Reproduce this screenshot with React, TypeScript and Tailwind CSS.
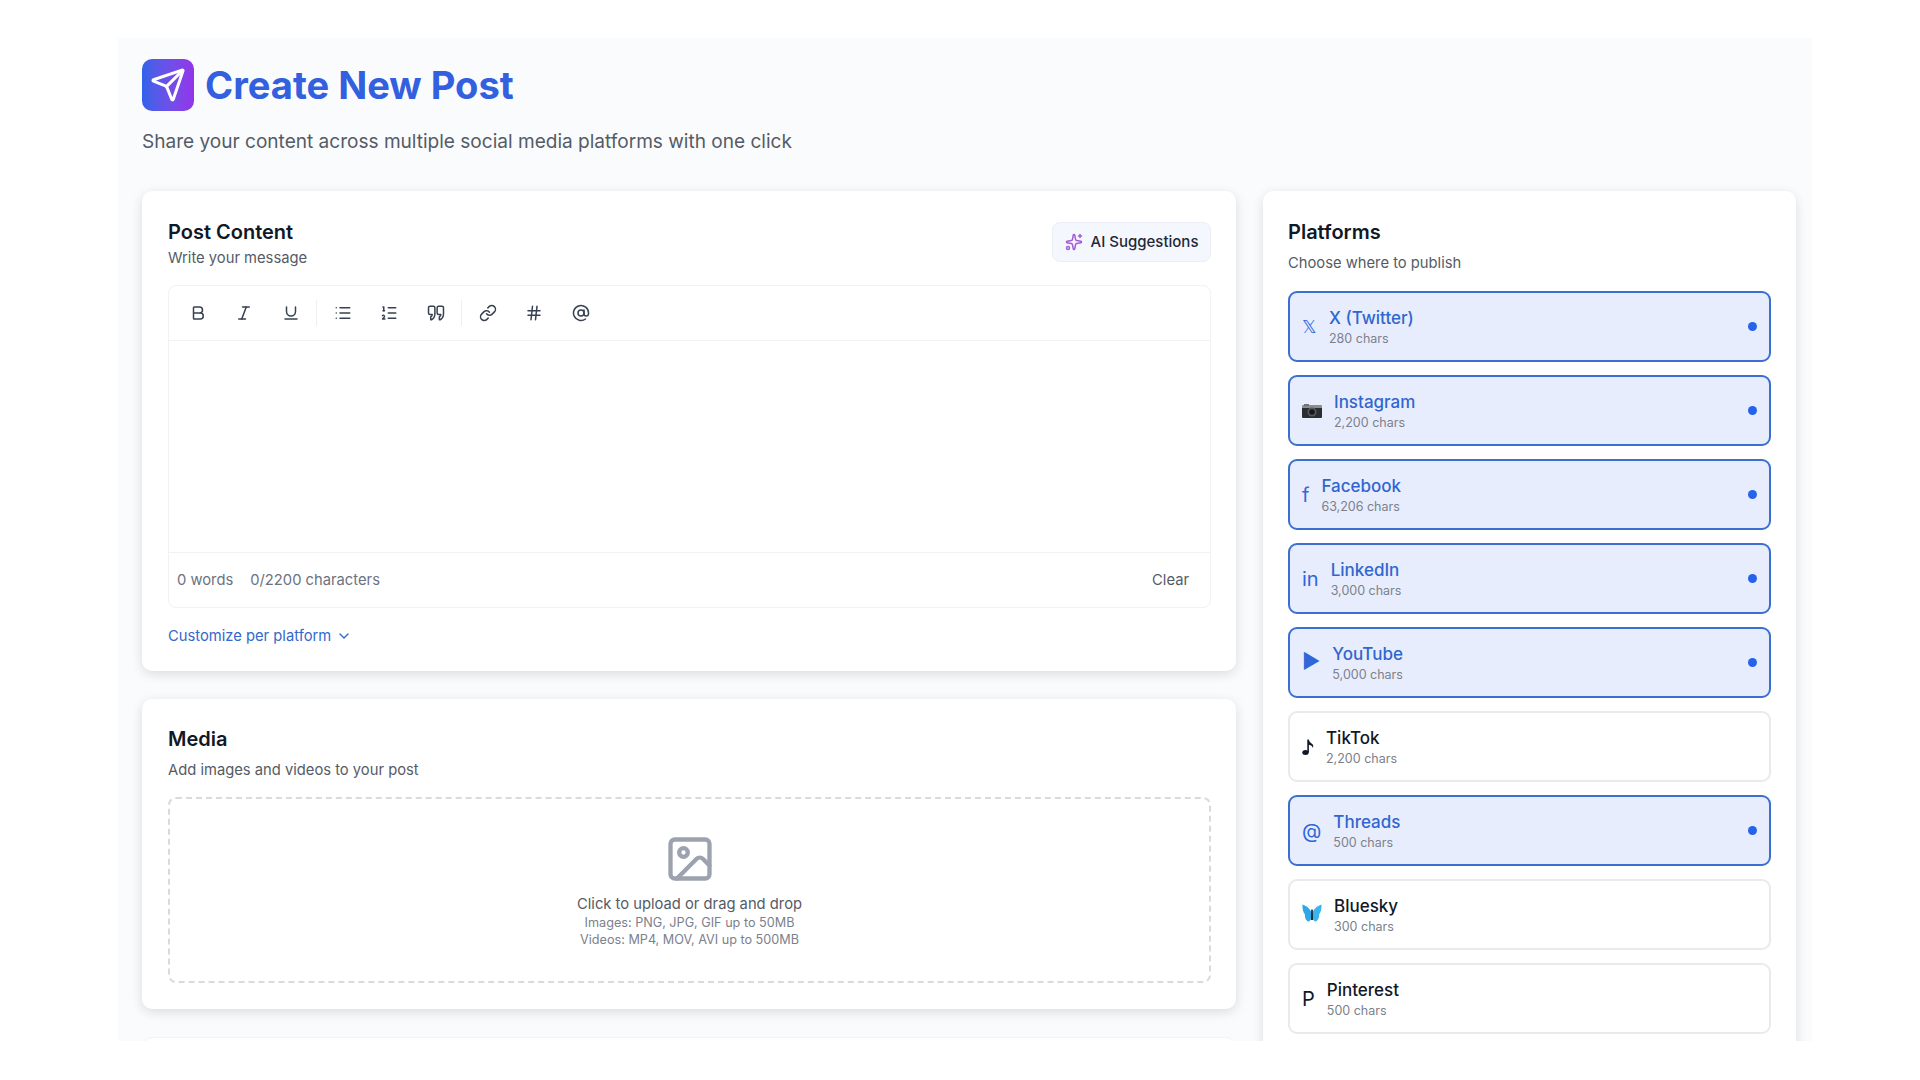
import React from "react";
import {
  AtSign,
  Bold,
  ChevronDown,
  Hash,
  Image,
  Italic,
  Link,
  List,
  ListOrdered,
  Send,
  Sparkles,
  Underline,
} from "lucide-react";

const CameraIcon = () => (
  <svg width="20" height="16" viewBox="0 0 20 16" className="block">
    <rect x="2" y="1" width="5" height="2" fill="#777" />
    <rect x="0" y="2.5" width="20" height="12.5" rx="1" fill="#2b2d30" />
    <rect x="0" y="2.5" width="20" height="2.5" fill="#8b8d90" />
    <circle cx="10" cy="9" r="4.6" fill="#55585c" />
    <circle cx="10" cy="9" r="2.8" fill="#16181a" />
  </svg>
);

const ButterflyIcon = () => (
  <svg width="20" height="20" viewBox="0 0 20 20" className="-mt-[3px] block">
    <path d="M9.500 9.500C8.500 6 4 2.500.5 1.500c-.3 4 .6 8 2.500 10-.3 3 1 6.500 3.500 7 2 .3 3-4 3-9z" fill="#2ea8e6" />
    <path d="M10.500 9.500C11.500 6 16 2.500 19.500 1.500c.3 4-.6 8-2.500 10 .3 3-1 6.500-3.500 7-2 .3-3-4-3-9z" fill="#3ab6ef" />
    <path d="M9.200 6.500h1.600l.4 10.500H8.800z" fill="#14313f" />
  </svg>
);

const NoteIcon = () => (
  <svg width="12" height="18" viewBox="0 0 12 18" className="block">
    <ellipse cx="3.500" cy="14.500" rx="3.200" ry="2.500" fill="#111827" />
    <path d="M5.300 14.500V1.500h1.500c.3 2.500 2.200 3.300 3.500 4.500 1 1 1.200 2.500.6 4-.4-1.800-2-3-4-3.300v7.800z" fill="#111827" />
  </svg>
);

const platforms = [
  { name: "X (Twitter)", chars: "280 chars", icon: <span className="block text-[18px]">𝕏</span>, on: true },
  { name: "Instagram", chars: "2,200 chars", icon: <CameraIcon />, on: true },
  { name: "Facebook", chars: "63,206 chars", icon: "f", on: true },
  { name: "LinkedIn", chars: "3,000 chars", icon: "in", on: true },
  { name: "YouTube", chars: "5,000 chars", icon: <span className="-mt-[4px] block">▶</span>, on: true },
  { name: "TikTok", chars: "2,200 chars", icon: <NoteIcon />, on: false },
  { name: "Threads", chars: "500 chars", icon: "@", on: true },
  { name: "Bluesky", chars: "300 chars", icon: <ButterflyIcon />, on: false },
  { name: "Pinterest", chars: "500 chars", icon: "P", on: false },
];

const toolGroups = [
  [Bold, Italic, Underline],
  [List, ListOrdered, QuoteIcon],
  [Link, Hash, AtSign],
];

function QuoteIcon(props: any) {
  return (
    <svg viewBox="0 0 24 24" fill="none" stroke="currentColor" strokeWidth="2" strokeLinecap="round" strokeLinejoin="round" {...props}>
      <path d="M4 3h4.500a2 2 0 0 1 2 2v8c0 3.500-1.800 6.500-4.500 8H5v-4c1.200-.5 2-1.500 2-3H4a2 2 0 0 1-2-2V5a2 2 0 0 1 2-2z" />
      <path d="M15.500 3H20a2 2 0 0 1 2 2v8c0 3.500-1.800 6.500-4.500 8h-1v-4c1.200-.5 2-1.500 2-3h-3a2 2 0 0 1-2-2V5a2 2 0 0 1 2-2z" />
    </svg>
  );
}

export default function App() {
  return (
    <div className="h-screen overflow-hidden bg-white pt-[38px] pl-[118px] font-['Inter',sans-serif]">
      <div className="h-[1003px] w-[1694px] overflow-hidden bg-[#fafbfd] pt-[21px] pr-4 pl-6">
        <header>
          <div className="flex items-center gap-[11px]">
            <div className="flex h-[52px] w-[52px] items-center justify-center rounded-[10px] bg-gradient-to-r from-[#2f62e8] to-[#9333ea] text-white">
              <Send size={36} strokeWidth={2} />
            </div>
            <h1 className="text-[38.1px] leading-[52px] font-bold text-[#3260de]">Create New Post</h1>
          </div>
          <p className="mt-[17px] text-[19.06px] leading-[28px] text-[#555b66]">
            Share your content across multiple social media platforms with one click
          </p>
        </header>

        <div className="mt-[35px] grid grid-cols-[1094px_533px] gap-[27px]">
          <div className="flex flex-col gap-[28px]">
            <section className="h-[480px] rounded-[10px] bg-white pt-[28px] pr-[25px] pl-[26px] shadow-[0_3px_12px_rgba(0,0,0,0.13)]">
              <div className="flex items-start justify-between">
                <div>
                  <h2 className="text-[20px] leading-[26px] font-semibold text-[#111827]">Post Content</h2>
                  <p className="mt-[2px] text-[14.75px] leading-[22px] text-[#555b66]">Write your message</p>
                </div>
                <button className="mt-[3px] flex h-[40px] w-[159px] items-center justify-center gap-[8px] rounded-[8px] border border-[#eceef5] bg-[#f5f7fe] text-[15px] font-medium text-[#1f2937]">
                  <Sparkles size={18} className="text-[#a45bd8]" />
                  AI Suggestions
                </button>
              </div>

              <div className="mt-[16px] h-[323px] rounded-[8px] border border-[#f1f2f4]">
                <div className="flex h-[55px] items-center gap-[7px] border-b border-[#f1f2f4] px-[9px]">
                  {toolGroups.map((group, i) => (
                    <React.Fragment key={i}>
                      {i > 0 && <div className="-mx-[1.25px] h-[26px] w-px bg-[#eeeff1]" />}
                      {group.map((Icon, j) => (
                        <button key={j} className="flex h-[39px] w-[39.5px] items-center justify-center text-[#374151]">
                          <Icon width={18} height={18} />
                        </button>
                      ))}
                    </React.Fragment>
                  ))}
                </div>
                <div className="h-[211px]" />
                <div className="flex h-[55px] items-center justify-between border-t border-[#f1f2f4] pr-[21px] pl-[8px] text-[14.75px] text-[#6b7280]">
                  <div className="flex gap-[17px]">
                    <span>0 words</span>
                    <span>0/2200 characters</span>
                  </div>
                  <span className="text-[#555b66]">Clear</span>
                </div>
              </div>

              <button className="mt-[18px] flex items-center gap-[5px] text-[14.75px] leading-[20px] text-[#3468cc]">
                Customize per platform
                <ChevronDown size={16} />
              </button>
            </section>

            <section className="h-[310px] rounded-[10px] bg-white pt-[27px] pr-[25px] pl-[26px] shadow-[0_3px_12px_rgba(0,0,0,0.13)]">
              <h2 className="text-[20px] leading-[26px] font-semibold text-[#111827]">Media</h2>
              <p className="mt-[7px] text-[14.75px] leading-[22px] text-[#555b66]">Add images and videos to your post</p>
              <div className="mt-[16px] flex h-[186px] flex-col items-center rounded-[8px] border-2 border-dashed border-[#d8dadf] pt-[34px]">
                <Image size={52} strokeWidth={2} className="text-[#9ca3af]" />
                <p className="mt-[9px] text-[14.75px] leading-[20px] text-[#555b66]">Click to upload or drag and drop</p>
                <p className="text-[12.65px] leading-[17px] text-[#7b818c]">Images: PNG, JPG, GIF up to 50MB</p>
                <p className="text-[12.65px] leading-[17px] text-[#7b818c]">Videos: MP4, MOV, AVI up to 500MB</p>
              </div>
            </section>

            <section className="h-[300px] rounded-[10px] border border-[#f1f2f4] bg-white" />
          </div>

          <aside className="h-[1000px] rounded-[10px] bg-white px-[25px] pt-[28px] shadow-[0_3px_12px_rgba(0,0,0,0.12)]">
            <h2 className="text-[20px] leading-[26px] font-semibold text-[#111827]">Platforms</h2>
            <p className="mt-[7px] text-[14.75px] leading-[22px] text-[#555b66]">Choose where to publish</p>
            <div className="mt-[17px] flex flex-col gap-[13px]">
              {platforms.map((p) => (
                <div
                  key={p.name}
                  className={
                    p.on
                      ? "flex h-[71px] items-center gap-[12px] rounded-[9px] border-2 border-[#3b6fd0] bg-[#e8edfd] px-[12px]"
                      : "flex h-[71px] items-center gap-[12px] rounded-[9px] border-2 border-[#e9eaec] bg-white px-[12px]"
                  }
                >
                  <span className={p.on ? "text-[20px] leading-none text-[#2f66d8]" : "text-[20px] leading-none text-[#111827]"}>
                    {p.icon}
                  </span>
                  <div className="flex-1">
                    <div className={p.on ? "text-[17px] leading-[24px] font-medium text-[#3066d0]" : "text-[17px] leading-[24px] font-medium text-[#111827]"}>
                      {p.name}
                    </div>
                    <div className="text-[12.5px] leading-[18px] text-[#7b818c]">{p.chars}</div>
                  </div>
                  {p.on && <div className="h-[9px] w-[9px] rounded-full bg-[#2563eb]" />}
                </div>
              ))}
            </div>
          </aside>
        </div>
      </div>
    </div>
  );
}
